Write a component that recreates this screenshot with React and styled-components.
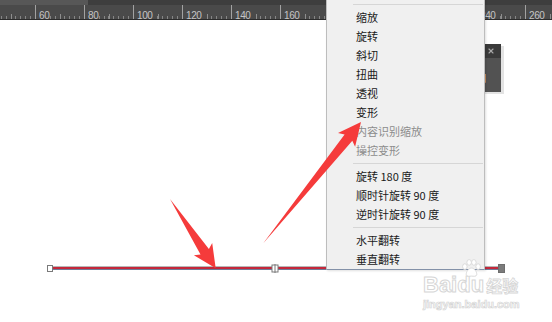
import React from 'react'
import styled, { createGlobalStyle } from 'styled-components'
import { X } from 'lucide-react'

const GlobalStyle = createGlobalStyle`
  html, body { margin: 0; padding: 0; background: #fff; }
`

// 40 and 280 fall outside the window, their cells carry ticks only
const RULER_VALUES = [40, 60, 80, 100, 120, 140, 160, 180, 200, 220, 240, 260, 280]
const HIDDEN_LABELS = [40, 280]

const MENU = [
  { type: 'sep' },
  { label: '缩放' },
  { label: '旋转' },
  { label: '斜切' },
  { label: '扭曲' },
  { label: '透视' },
  { label: '变形' },
  { label: '内容识别缩放', disabled: true },
  { label: '操控变形', disabled: true },
  { type: 'sep' },
  { label: '旋转 180 度' },
  { label: '顺时针旋转 90 度' },
  { label: '逆时针旋转 90 度' },
  { type: 'sep' },
  { label: '水平翻转' },
  { label: '垂直翻转' },
]

// fat arrow: pointed tail, widening shaft, head with barbs
function arrowPoints(tx, ty, px, py) {
  const dx = px - tx, dy = py - ty
  const len = Math.hypot(dx, dy)
  const ux = dx / len, uy = dy / len
  const nx = -uy, ny = ux
  const head = 22, half = 11, shaft = 5
  const bx = px - ux * head, by = py - uy * head
  const pts = [
    [tx, ty],
    [bx + ux * 2 + nx * shaft, by + uy * 2 + ny * shaft],
    [bx - ux * 1 + nx * half, by - uy * 1 + ny * half],
    [px, py],
    [bx - ux * 1 - nx * half, by - uy * 1 - ny * half],
    [bx + ux * 2 - nx * shaft, by + uy * 2 - ny * shaft],
  ]
  return pts.map(p => p.map(v => v.toFixed(1)).join(',')).join(' ')
}

export default function App() {
  return (
    <>
      <GlobalStyle />
      <Stage>
        <TopStrip>
          <TabLeft />
          <TabRest />
        </TopStrip>
        <Ruler>
          <RulerTrack>
            {RULER_VALUES.map(v => (
              <RulerCell key={v}>
                {!HIDDEN_LABELS.includes(v) && <RulerLabel>{v}</RulerLabel>}
              </RulerCell>
            ))}
          </RulerTrack>
        </Ruler>
        <Canvas />

        <PathLine />
        <Handle $x={47} $y={265} />
        <CenterHandle viewBox="0 0 8 9">
          <rect x="1" y="1" width="6" height="7" fill="#fff" stroke="#7a7a7a" strokeWidth="1" />
          <line x1="4" y1="0" x2="4" y2="9" stroke="#7a7a7a" strokeWidth="1" />
        </CenterHandle>
        <Handle $x={498} $y={264} $filled />

        <Panel>
          <PanelHead>
            <X size={8} strokeWidth={3.2} color="#a9a9a9" />
          </PanelHead>
          <PanelBody>自</PanelBody>
        </Panel>

        <Menu>
          {MENU.map((m, i) =>
            m.type === 'sep' ? (
              <Separator key={i} />
            ) : (
              <Item key={i} $disabled={m.disabled}>{m.label}</Item>
            )
          )}
        </Menu>

        <Arrows viewBox="0 0 552 322">
          <polygon points={arrowPoints(170, 199, 215.7, 268.3)} fill="#f53b3b" />
          <polygon points={arrowPoints(263.3, 243.3, 361, 122)} fill="#f53b3b" />
        </Arrows>

        <Watermark>
          <Paw viewBox="0 0 22 20">
            <ellipse cx="4" cy="8" rx="2.4" ry="3" />
            <ellipse cx="8.5" cy="3.6" rx="2.4" ry="3" />
            <ellipse cx="13.5" cy="3.6" rx="2.4" ry="3" />
            <ellipse cx="18" cy="8" rx="2.4" ry="3" />
            <path d="M11 9.5 C8 9.5 5 14 5.5 16.5 C6 19 9 18 11 18 C13 18 16 19 16.5 16.5 C17 14 14 9.5 11 9.5 Z" />
          </Paw>
          <BrandRow>
            <Brand>Baidu</Brand>
            <BrandCn>经验</BrandCn>
          </BrandRow>
          <Site>jingyan.baidu.com</Site>
        </Watermark>
      </Stage>
    </>
  )
}

const Stage = styled.div`
  position: relative;
  width: 552px;
  height: 322px;
  overflow: hidden;
  background: #fff;
  display: flex;
  flex-direction: column;
`

const TopStrip = styled.div`
  display: flex;
  height: 5px;
`

const TabLeft = styled.div`
  width: 88px;
  background: #575757;
`

const TabRest = styled.div`
  flex: 1;
  background: #3e3e3e;
`

const Ruler = styled.div`
  height: 14px;
  background: #4a4a4a;
  border-bottom: 1px solid #2c2c2c;
  overflow: hidden;
`

const RulerTrack = styled.div`
  display: flex;
  height: 100%;
  margin-left: -14px;
`

const RulerCell = styled.div`
  flex: 0 0 49px;
  box-sizing: border-box;
  height: 100%;
  border-left: 1px solid #a2a2a2;
  background:
    linear-gradient(#8e8e8e, #8e8e8e) 23.5px 100% / 1px 5px no-repeat,
    repeating-linear-gradient(90deg, transparent 0 3.9px, #858585 3.9px 4.9px) 0 100% / 100% 3px no-repeat;
`

const RulerLabel = styled.span`
  display: inline-block;
  margin: 5px 0 0 2px;
  padding: 0 1px;
  background: #4a4a4a;
  font-family: "Liberation Sans", Arial, sans-serif;
  font-size: 10px;
  line-height: 10px;
  letter-spacing: -0.4px;
  color: #c4c4c4;
`

const Canvas = styled.div`
  flex: 1;
  background: #fff;
`

const PathLine = styled.div`
  position: absolute;
  left: 50px;
  top: 267px;
  width: 449px;
  height: 2px;
  background: #c4283b;
  box-shadow: 0 -1px 0 #b9b9b9, 0 1px 0 #6f7b98;
`

const Handle = styled.div`
  position: absolute;
  left: ${p => p.$x}px;
  top: ${p => p.$y}px;
  width: ${p => (p.$filled ? 7 : 6)}px;
  height: ${p => (p.$filled ? 9 : 7)}px;
  box-sizing: border-box;
  border: 1px solid ${p => (p.$filled ? '#6e6e6e' : '#7a7a7a')};
  background: ${p => (p.$filled ? '#7b7b7b' : '#fff')};
`

const CenterHandle = styled.svg`
  position: absolute;
  left: 271px;
  top: 264px;
  width: 8px;
  height: 9px;
`

const Panel = styled.div`
  position: absolute;
  left: 440px;
  top: 44px;
  width: 61px;
  height: 48px;
  display: flex;
  flex-direction: column;
  background: #525252;
  box-shadow: 3px 2px 0 #e3e3e3;
`

const PanelHead = styled.div`
  height: 14px;
  display: flex;
  align-items: center;
  justify-content: flex-end;
  padding-right: 6px;
  background: #3a3a3a;
`

const PanelBody = styled.div`
  flex: 1;
  padding: 13px 0 0 36px;
  font-family: "Noto Sans CJK SC", sans-serif;
  font-size: 11px;
  line-height: 12px;
  color: #e6d49a;
`

const Menu = styled.div`
  position: absolute;
  left: 326px;
  top: -13px;
  width: 159px;
  box-sizing: border-box;
  padding: 13px 1px 0 0;
  background: #f0f0f0;
  border: 1px solid #bdbdbd;
  border-bottom-color: #8391a8;
  box-shadow: 1px 1px 2px rgba(0, 0, 0, 0.12);
`

const Separator = styled.div`
  height: 1px;
  margin: 3px 0 3px 26px;
  background: #d6d6d6;
`

const Item = styled.div`
  height: 19px;
  line-height: 19px;
  padding-left: 29px;
  font-family: "Noto Sans CJK SC", sans-serif;
  font-size: 11px;
  white-space: nowrap;
  color: ${p => (p.$disabled ? '#8c8c8c' : '#1a1a1a')};
`

const Arrows = styled.svg`
  position: absolute;
  left: 0;
  top: 0;
  width: 552px;
  height: 322px;
  pointer-events: none;
`

const Watermark = styled.div`
  position: absolute;
  left: 423px;
  top: 274px;
  display: flex;
  flex-direction: column;
  gap: 3px;
`

const Paw = styled.svg`
  position: absolute;
  left: 38px;
  top: -15px;
  width: 21px;
  height: 19px;
  fill: #fff;
  stroke: #d8d8d8;
  stroke-width: 1;
`

const BrandRow = styled.div`
  display: flex;
  align-items: baseline;
  gap: 2px;
`

const Brand = styled.span`
  font-family: "Liberation Sans", Arial, sans-serif;
  font-weight: 700;
  font-size: 22px;
  line-height: 22px;
  color: #fff;
  -webkit-text-stroke: 1px #d6d6d6;
`

const BrandCn = styled.span`
  font-family: "Noto Sans CJK SC", sans-serif;
  font-weight: 700;
  font-size: 16px;
  line-height: 22px;
  color: #fff;
  -webkit-text-stroke: 0.8px #d6d6d6;
`

const Site = styled.span`
  font-family: "Liberation Sans", Arial, sans-serif;
  font-weight: 700;
  font-size: 11px;
  line-height: 11px;
  color: #fff;
  -webkit-text-stroke: 0.7px #d4d4d4;
`
